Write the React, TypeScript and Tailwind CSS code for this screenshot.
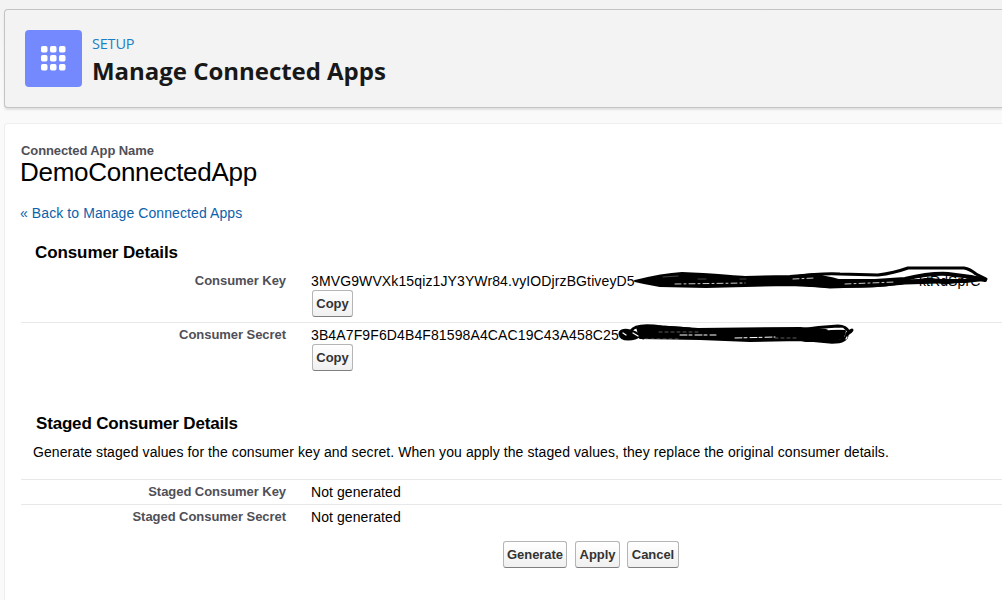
import React from 'react';
import clsx from 'clsx';

interface DetailRowProps {
  label: string;
  className?: string;
  children: React.ReactNode;
}

function Button({ className, children }: { className?: string; children: React.ReactNode }) {
  return (
    <button
      type="button"
      className={clsx(
        'h-[27px] rounded-[3px] border border-[#b5b5b5] border-b-[#7f7f7f] bg-gradient-to-b from-white to-[#f0f0f0] text-[13px] leading-[25px] font-bold tracking-[-0.05px] text-[#333]',
        className
      )}
    >
      {children}
    </button>
  );
}

function DetailRow({ label, className, children }: DetailRowProps) {
  return (
    <div className={clsx('flex', className)}>
      <div className="w-[265px] shrink-0 text-right text-[13px] leading-4 font-bold tracking-[-0.05px] text-[#4f4f57]">
        {label}
      </div>
      <div className="ml-[25px] text-sm leading-4 tracking-[0.08px] whitespace-nowrap">{children}</div>
    </div>
  );
}

// Hand-drawn strokes that hide the rest of the key
function KeyScribble() {
  return (
    <svg
      className="absolute -top-[11px] left-[319px]"
      width="362"
      height="32"
      viewBox="630 262 362 32"
      fill="none"
      stroke="#000"
      strokeLinecap="round"
      strokeLinejoin="round"
    >
      <path
        fill="#000"
        strokeWidth="2"
        d="M635 281 C647 278 665 274 682 273 C712 274 728 276 745 277 L790 276 L815 274 L825 277 L842 284 L832 287 L790 285 L745 286 L706 287 L660 286 L644 283 Z"
      />
      <path strokeWidth="3" d="M795 277 Q820 273 840 274 L878 275 Q894 273 908 268 L964 268 Q970 269 976 274 L986 279" />
      <path strokeWidth="4" d="M815 278 Q825 277 838 281 L875 281 L905 279 Q930 273 948 274 L971 277 L985 280" />
      <path strokeWidth="5" d="M810 284 Q840 286 872 285 L905 282 L939 281" />
      <path strokeWidth="4" d="M930 281 L965 281 L984 279" />
      <path strokeWidth="3" d="M790 283 L830 287 L885 285 L930 279 L944 283 L972 280" />
      <path stroke="#fff" strokeWidth="0.8" strokeDasharray="6 3 2 3" d="M675 284 L745 283 M793 279 L815 278 M845 284 L895 282" />
      <path stroke="#aaa" strokeWidth="0.4" d="M663 277 L678 276 M698 279 L706 279 M740 279 L746 279" />
    </svg>
  );
}

// Same for the secret
function SecretScribble() {
  return (
    <svg
      className="absolute -top-[7px] left-[304px]"
      width="240"
      height="26"
      viewBox="615 320 240 26"
      fill="none"
      stroke="#000"
      strokeLinecap="round"
      strokeLinejoin="round"
    >
      <path
        fill="#000"
        strokeWidth="2"
        d="M637 327 C658 325 678 328 698 329 L800 328 L826 330 L845 331 L843 338 L830 341 L806 341 L800 340 L750 341 L700 339 L640 338 Z"
      />
      <path fill="#000" strokeWidth="3" d="M643 338 C633 329 620 328 620 334 C621 341 634 340 641 335 Z" />
      <path strokeWidth="3" d="M631 331 C635 324 649 325 662 327 L690 329" />
      <path strokeWidth="3" d="M800 330 Q818 327 838 326 Q846 326 849 332 L852 330" />
      <path strokeWidth="3.5" d="M800 339 L832 342 Q847 342 847 334 L851 331" />
      <path stroke="#fff" strokeWidth="1" strokeDasharray="7 2 3 3" d="M680 335 L716 335 M735 338 L775 337" />
      <path stroke="#bbb" strokeWidth="0.5" strokeDasharray="3 3" d="M659 332 L700 332 M645 339 L678 339 M775 338 L798 338" />
      <path stroke="#fff" strokeWidth="1.3" d="M623 333 L626 335 M633 333 L638 336 M828 329.5 L843 328.5 M846 339 L847 337" />
    </svg>
  );
}

function PageHeader() {
  return (
    <header className="mt-[9px] ml-1 flex h-[99px] items-start rounded-l-[4px] border border-r-0 border-[#c4c4c4] bg-[#f3f3f3] pt-5 pl-5 shadow-[0_2px_2px_rgba(0,0,0,0.1)]">
      <div className="flex size-[57px] shrink-0 items-center justify-center rounded-[4px] bg-[#7589ff]">
        <svg width="25" height="25" viewBox="0 0 25 25" fill="#fff">
          {[0, 9, 18].map(y => [0, 9, 18].map(x => <rect key={`${x}-${y}`} x={x} y={y} width="6.5" height="6.5" rx="1.7" />))}
        </svg>
      </div>
      <div className="ml-[10px] font-['Open_Sans','Noto_Sans',sans-serif]">
        <p className="mt-[4px] text-[14.5px] leading-5 tracking-[-0.2px] text-[#1b7fc4]">SETUP</p>
        <h1 className="mt-[1px] text-2xl leading-8 font-bold tracking-[-0.03px] whitespace-nowrap text-[#181818]">
          Manage Connected Apps
        </h1>
      </div>
    </header>
  );
}

export default function App() {
  return (
    <div className="flex h-[600px] w-[1002px] flex-col overflow-hidden bg-linear-to-b from-[#f3f3f3] from-[9px] to-[#fafafa] to-[108px] font-['Liberation_Sans',Arial,sans-serif] text-black">
      <PageHeader />

      <main className="mt-[15px] ml-1 flex-1 rounded-tl-[4px] border-t border-l border-[#eee] bg-white pl-4">
        <h2 className="mt-[19px] text-[13px] leading-4 font-bold tracking-[-0.1px] text-[#4f4f57]">
          Connected App Name
        </h2>
        <p className="-mt-px -ml-px text-[26px] leading-7 tracking-[-0.28px]">DemoConnectedApp</p>
        <a href="#" className="mt-[19px] -ml-px block text-sm leading-4 tracking-[0.09px] text-[#0b62ab]">
          « Back to Manage Connected Apps
        </a>

        <section>
          <h3 className="mt-[22px] ml-[14px] text-[17px] leading-5 font-bold tracking-[-0.1px]">Consumer Details</h3>
          <DetailRow label="Consumer Key" className="mt-[10px] h-[49px]">
            <div className="relative">
              <span className="tracking-[0.12px]">3MVG9WVXk15qiz1JY3YWr84.vyIODjrzBGtiveyD5</span>
              <span className="absolute top-0 left-[608px]">ktRdSprC</span>
              <KeyScribble />
            </div>
            <Button className="mt-[1px] ml-[1px] w-[41px]">Copy</Button>
          </DetailRow>
          <DetailRow label="Consumer Secret" className="border-t border-[#e8e8e8] pt-1">
            <div className="relative">
              <span className="tracking-[0.12px]">3B4A7F9F6D4B4F81598A4CAC19C43A458C25</span>
              <SecretScribble />
            </div>
            <Button className="mt-[1px] ml-[1px] w-[41px]">Copy</Button>
          </DetailRow>
        </section>

        <section>
          <h3 className="mt-[43px] ml-[15px] text-[17px] leading-5 font-bold tracking-[-0.18px]">
            Staged Consumer Details
          </h3>
          <p className="mt-[10px] ml-3 text-sm leading-4 tracking-[0.087px]">
            Generate staged values for the consumer key and secret. When you apply the staged values, they replace the
            original consumer details.
          </p>
          <DetailRow label="Staged Consumer Key" className="mt-[19px] h-[25px] border-t border-[#e8e8e8] pt-1">
            Not generated
          </DetailRow>
          <DetailRow label="Staged Consumer Secret" className="h-[25px] border-t border-[#e8e8e8] pt-1">
            Not generated
          </DetailRow>
        </section>

        <div className="mt-3 ml-[482px] flex">
          <Button className="w-16">Generate</Button>
          <Button className="ml-2 w-[45px]">Apply</Button>
          <Button className="ml-[7px] w-[52px]">Cancel</Button>
        </div>
      </main>
    </div>
  );
}
